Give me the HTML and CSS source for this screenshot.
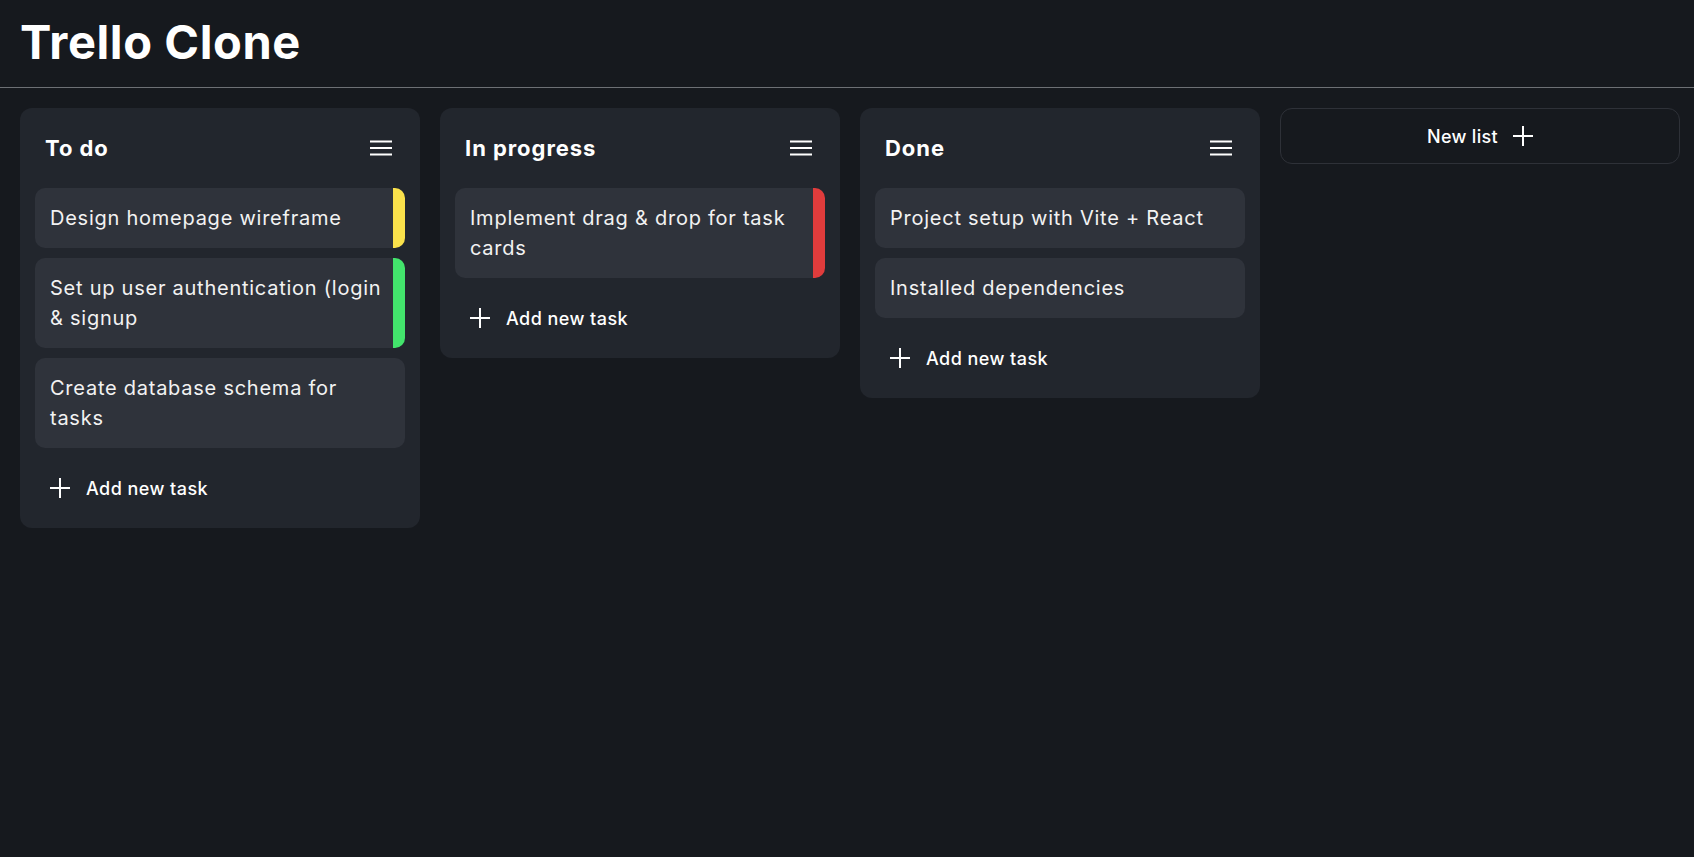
FILE: index.html
```html
<!DOCTYPE html>
<html lang="en">
<head>
<meta charset="utf-8">
<title>Trello Clone</title>
<link rel="stylesheet" href="styles.css">
</head>
<body>
<header class="topbar">
  <h1 class="brand">Trello Clone</h1>
</header>
<main class="board">
  <section class="list">
    <div class="list-head">
      <h2 class="list-title">To do</h2>
      <svg class="menu" width="22" height="16" viewBox="0 0 22 16"><path d="M0 1.5H22M0 8H22M0 14.5H22" stroke="#fff" stroke-width="1.8" fill="none"/></svg>
    </div>
    <div class="cards">
      <div class="card tag-yellow">Design homepage wireframe</div>
      <div class="card tag-green">Set up user authentication (login &amp; signup</div>
      <div class="card">Create database schema for tasks</div>
    </div>
    <button class="add-task"><svg class="plus" width="20" height="20" viewBox="0 0 20 20"><path d="M10 0V20M0 10H20" stroke="#fff" stroke-width="2" fill="none"/></svg><span>Add new task</span></button>
  </section>
  <section class="list">
    <div class="list-head">
      <h2 class="list-title">In progress</h2>
      <svg class="menu" width="22" height="16" viewBox="0 0 22 16"><path d="M0 1.5H22M0 8H22M0 14.5H22" stroke="#fff" stroke-width="1.8" fill="none"/></svg>
    </div>
    <div class="cards">
      <div class="card tag-red">Implement drag &amp; drop for task cards</div>
    </div>
    <button class="add-task"><svg class="plus" width="20" height="20" viewBox="0 0 20 20"><path d="M10 0V20M0 10H20" stroke="#fff" stroke-width="2" fill="none"/></svg><span>Add new task</span></button>
  </section>
  <section class="list">
    <div class="list-head">
      <h2 class="list-title">Done</h2>
      <svg class="menu" width="22" height="16" viewBox="0 0 22 16"><path d="M0 1.5H22M0 8H22M0 14.5H22" stroke="#fff" stroke-width="1.8" fill="none"/></svg>
    </div>
    <div class="cards">
      <div class="card">Project setup with Vite + React</div>
      <div class="card">Installed dependencies</div>
    </div>
    <button class="add-task"><svg class="plus" width="20" height="20" viewBox="0 0 20 20"><path d="M10 0V20M0 10H20" stroke="#fff" stroke-width="2" fill="none"/></svg><span>Add new task</span></button>
  </section>
  <button class="new-list"><span>New list</span><svg class="plus" width="20" height="20" viewBox="0 0 20 20"><path d="M10 0V20M0 10H20" stroke="#fff" stroke-width="2" fill="none"/></svg></button>
</main>
</body>
</html>
```
FILE: styles.css
```css
* { box-sizing: border-box; }
html, body { margin: 0; padding: 0; }
body {
  background: #16191e;
  color: #fff;
  font-family: Inter, "Open Sans", "Liberation Sans", sans-serif;
  min-height: 857px;
  overflow: hidden;
}
.topbar {
  height: 88px;
  border-bottom: 1px solid #6d7075;
  display: flex;
  align-items: center;
  padding: 0 20px;
}
.brand {
  margin: 0;
  font-size: 47px;
  font-weight: 700;
  letter-spacing: 0.6px;
  line-height: 1;
  padding-bottom: 4px;
}
.board {
  display: flex;
  align-items: flex-start;
  gap: 20px;
  padding: 20px;
}
.list {
  flex: none;
  width: 400px;
  background: #22262d;
  border-radius: 12px;
  padding: 20px 15px 10px;
}
.list-head {
  height: 40px;
  display: flex;
  align-items: center;
  justify-content: space-between;
  padding: 0 13px 0 10px;
  margin-bottom: 20px;
}
.list-title {
  margin: 0;
  font-size: 22px;
  font-weight: 700;
  letter-spacing: 0.95px;
}
.menu { display: block; }
.cards {
  display: flex;
  flex-direction: column;
  gap: 10px;
}
.card {
  background: #2f333b;
  border-radius: 10px;
  padding: 15px;
  font-size: 20px;
  line-height: 30px;
  letter-spacing: 0.75px;
  color: #f2f2f2;
}
.tag-yellow, .tag-green, .tag-red { padding-right: 3px; }
.tag-yellow { border-right: 12px solid #fae14b; }
.tag-green { border-right: 12px solid #43e46c; }
.tag-red { border-right: 12px solid #e03c3c; }
.add-task {
  margin-top: 10px;
  width: 100%;
  height: 60px;
  background: none;
  border: 0;
  color: #fff;
  display: flex;
  align-items: center;
  gap: 16px;
  padding: 0 15px;
  font-family: inherit;
  font-size: 18px;
  font-weight: 500;
  letter-spacing: 0.45px;
  cursor: pointer;
}
.plus { display: block; flex: none; }
.new-list {
  flex: none;
  width: 400px;
  height: 56px;
  background: none;
  border: 1px solid #2e3138;
  border-radius: 12px;
  color: #fff;
  display: flex;
  align-items: center;
  justify-content: center;
  gap: 15px;
  font-family: inherit;
  font-size: 18px;
  font-weight: 500;
  letter-spacing: 0.3px;
  cursor: pointer;
}
```
